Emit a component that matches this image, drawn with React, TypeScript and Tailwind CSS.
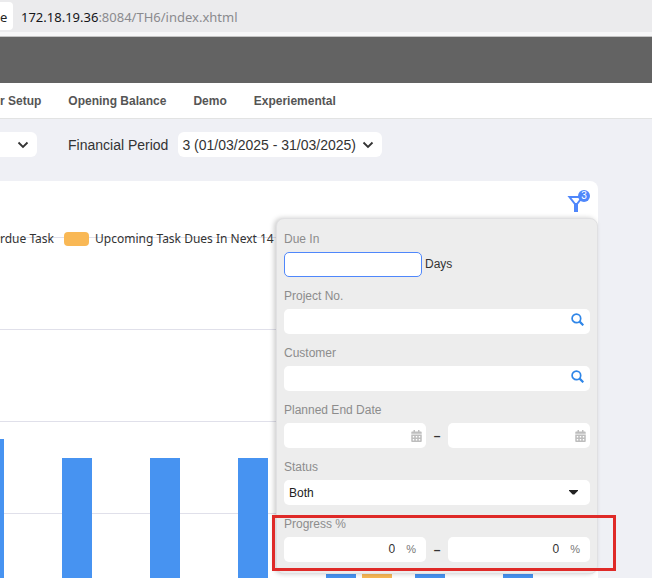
import type { ReactNode } from 'react';
import { FaCalendarAlt } from 'react-icons/fa';

const MENU_ITEMS = ['Opening Balance', 'Demo', 'Experiemental'];

const BARS = [
  { x: -26, top: 258, color: '#4793f1' },
  { x: 62, top: 277, color: '#4793f1' },
  { x: 150, top: 277, color: '#4793f1' },
  { x: 238, top: 277, color: '#4793f1' },
  { x: 326, top: 277, color: '#4793f1' },
  { x: 362, top: 277, color: '#f9b855' },
  { x: 415, top: 277, color: '#4793f1' },
  { x: 503, top: 277, color: '#4793f1' },
];

const GRID_LINES = [56, 148, 240, 332];

function AddressBar() {
  return (
    <div className="flex h-9 shrink-0 items-start border-b-4 border-[#f7f7f8] bg-[#ebebed] pt-0.5 font-['Noto_Sans',sans-serif] text-[13px] leading-[30px]">
      <span className="flex h-7 w-[13px] rounded-r-sm bg-white text-[#222]">e</span>
      <span className="ml-2 whitespace-nowrap text-[#8a8a8e]">
        <span className="text-[#151519]">172.18.19.36</span>:8084/TH6/index.xhtml
      </span>
    </div>
  );
}

function MenuBar() {
  return (
    <nav className="flex h-9 shrink-0 items-center gap-[27px] overflow-hidden border-b border-[#e2e3e3] bg-white text-xs font-bold text-[#555]">
      <a href="#setup" className="whitespace-nowrap">
        r Setup
      </a>
      {MENU_ITEMS.map((item) => (
        <a key={item} href={`#${item}`} className="whitespace-nowrap">
          {item}
        </a>
      ))}
    </nav>
  );
}

function Chevron() {
  return (
    <svg
      className="pointer-events-none absolute right-2 top-[7px] size-3"
      viewBox="0 0 12 12"
      fill="none"
      stroke="#333"
      strokeWidth="1.8"
    >
      <path d="M1.5 3.5 6 8l4.5-4.5" />
    </svg>
  );
}

function PeriodBar() {
  return (
    <div className="flex items-center pb-6 pt-[13px] text-sm text-[#333]">
      <div className="relative w-[37px]">
        <select aria-label="Financial Year" className="h-[25px] w-full appearance-none rounded-r-md bg-white">
          <option></option>
        </select>
        <Chevron />
      </div>
      <label htmlFor="period" className="ml-[31px] whitespace-nowrap">
        Financial Period
      </label>
      <div className="relative ml-2.5">
        <select id="period" className="h-[25px] w-[204px] appearance-none rounded-md bg-white pl-1">
          <option>3 (01/03/2025 - 31/03/2025)</option>
        </select>
        <Chevron />
      </div>
    </div>
  );
}

function TaskChart() {
  return (
    <svg className="absolute inset-0 h-full w-full">
      {GRID_LINES.map((y) => (
        <rect key={y} x="0" y={y} width="590" height="1" fill="#e0e0ea" />
      ))}
      {BARS.map((bar) => (
        <rect key={bar.x} x={bar.x} y={bar.top} width="30" height="400" fill={bar.color} />
      ))}
    </svg>
  );
}

function SearchIcon() {
  return (
    <svg className="size-[13px]" viewBox="0 0 13 13" fill="none" stroke="#2f86e8">
      <circle cx="5.4" cy="5.4" r="4.3" strokeWidth="1.7" />
      <path d="M8.4 8.4 12.3 12.3" strokeWidth="2.2" />
    </svg>
  );
}

function Field(props: { label: string; id: string; children: ReactNode }) {
  return (
    <div>
      <label htmlFor={props.id} className="mb-1 block leading-[18px] text-[#8c8c8c]">
        {props.label}
      </label>
      <div className="flex h-[25px] items-center">{props.children}</div>
    </div>
  );
}

function LookupInput({ id }: { id: string }) {
  return (
    <div className="flex h-full w-full items-center rounded-[5px] bg-white pr-1.5">
      <input id={id} type="text" className="h-full min-w-0 flex-1 px-1 outline-none" />
      <button type="button" aria-label="Search" className="pb-1">
        <SearchIcon />
      </button>
    </div>
  );
}

function DateInput({ id, label }: { id: string; label?: string }) {
  return (
    <div className="flex h-full min-w-0 flex-1 items-center rounded-[5px] bg-white pr-1">
      <input id={id} aria-label={label} type="text" className="h-full min-w-0 flex-1 px-1 outline-none" />
      <button type="button" aria-label="Pick date">
        <FaCalendarAlt className="h-3 w-[11px] text-[#bdbdbd]" />
      </button>
    </div>
  );
}

function PercentInput({ id, label }: { id: string; label?: string }) {
  return (
    <div className="flex h-full min-w-0 flex-1 items-center rounded-[5px] bg-white pb-px pr-2.5">
      <input
        id={id}
        aria-label={label}
        type="text"
        defaultValue="0"
        className="h-full min-w-0 flex-1 text-right outline-none"
      />
      <span className="ml-[11px] text-[11px] text-[#777]">%</span>
    </div>
  );
}

function Dash() {
  return <span className="w-[22px] text-center font-bold">–</span>;
}

function FilterPanel() {
  return (
    <form className="absolute left-[276px] right-0 top-[37px] flex flex-col gap-2.5 rounded-lg border border-[#e0e0e2] bg-[#ededed] px-[7px] py-[11px] text-xs text-[#333] shadow-[-2px_0_5px_rgba(0,0,0,0.2)]">
      <Field label="Due In" id="dueIn">
        <input
          id="dueIn"
          type="text"
          className="h-full w-[138px] rounded-[5px] border border-[#4f87fb] bg-white px-1 outline-none"
        />
        <span className="ml-[3px] pb-0.5">Days</span>
      </Field>
      <Field label="Project No." id="project">
        <LookupInput id="project" />
      </Field>
      <Field label="Customer" id="customer">
        <LookupInput id="customer" />
      </Field>
      <Field label="Planned End Date" id="endFrom">
        <DateInput id="endFrom" />
        <Dash />
        <DateInput id="endTo" label="Planned End Date to" />
      </Field>
      <Field label="Status" id="status">
        <div className="relative h-full w-full">
          <select
            id="status"
            className="h-full w-full appearance-none rounded-[5px] bg-white px-[5px] text-[#222]"
          >
            <option>Both</option>
          </select>
          <svg className="pointer-events-none absolute right-3 top-2.5 h-[5px] w-[9px]" viewBox="0 0 9 5">
            <path d="M0 0h9v.8L5.3 4.6H3.7L0 .8z" fill="#222" />
          </svg>
        </div>
      </Field>
      <div className="relative">
        <Field label="Progress %" id="progressFrom">
          <PercentInput id="progressFrom" />
          <Dash />
          <PercentInput id="progressTo" label="Progress % to" />
        </Field>
        <div className="pointer-events-none absolute -bottom-[9px] -left-3 -right-[26px] top-0 border-[3px] border-[#df2a28]" />
      </div>
    </form>
  );
}

export default function App() {
  return (
    <div className="flex h-screen flex-col overflow-hidden bg-[#eff0f5] font-['Liberation_Sans',Arial,sans-serif]">
      <AddressBar />
      <header className="h-[47px] shrink-0 border-t border-[#c4c4c4] bg-[#636363]" />
      <MenuBar />
      <PeriodBar />
      <main className="relative mr-[54px] flex-1 rounded-tr-lg bg-white">
        <TaskChart />
        <div className="relative flex items-center pt-12 font-['Noto_Sans',sans-serif] text-xs leading-5 text-[#333]">
          <span className="whitespace-nowrap">rdue Task</span>
          <span className="ml-2.5 h-3.5 w-[25px] rounded bg-[#f9b855]" />
          <span className="ml-[6px] whitespace-nowrap">Upcoming Task Dues In Next 14</span>
        </div>
        <button type="button" aria-label="Filters" className="absolute right-2 top-2 h-6 w-[23px]">
          <svg className="h-6 w-[23px]" viewBox="0 0 23 24" fill="none">
            <path d="M2.5 8h13L10 15H8z" stroke="#4f87fb" strokeWidth="2" />
            <path d="M7 14h4v9H7z" fill="#4f87fb" />
          </svg>
          <span className="absolute right-0 top-px size-3 rounded-full bg-[#4f87fb] text-center text-[10px] leading-3 text-white">
            3
          </span>
        </button>
        <FilterPanel />
      </main>
    </div>
  );
}
